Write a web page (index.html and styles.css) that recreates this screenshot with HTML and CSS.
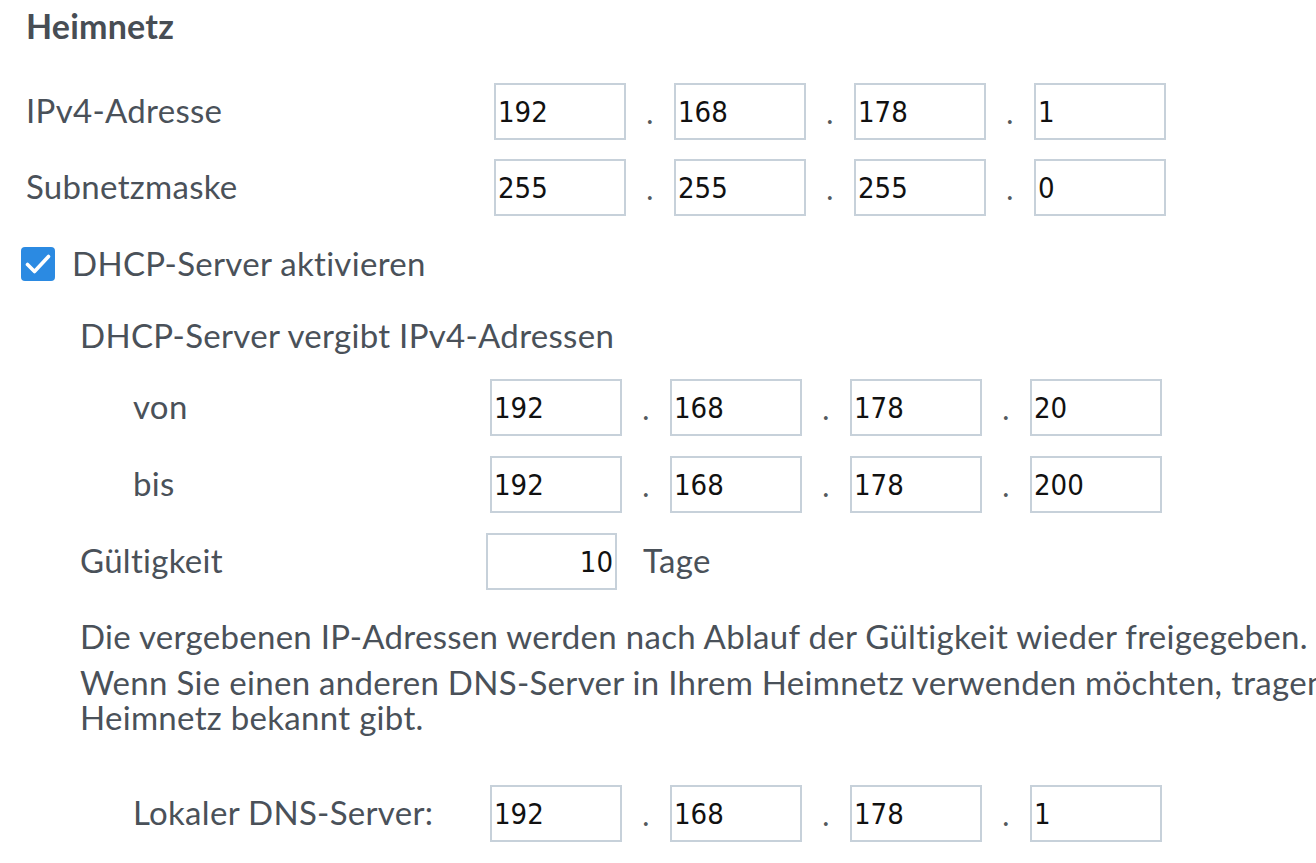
FILE: index.html
```html
<!DOCTYPE html>
<html lang="de">
<head>
<meta charset="utf-8">
<title>Heimnetz</title>
<link rel="stylesheet" href="styles.css">
</head>
<body>
<div class="page">
  <h1 class="title">Heimnetz</h1>

  <div class="row row-first">
    <span class="label label-top">IPv4-Adresse</span>
    <div class="ip">
      <input class="octet" type="text" value="192"><span class="dot">.</span>
      <input class="octet" type="text" value="168"><span class="dot">.</span>
      <input class="octet" type="text" value="178"><span class="dot">.</span>
      <input class="octet" type="text" value="1">
    </div>
  </div>

  <div class="row row-next">
    <span class="label label-top">Subnetzmaske</span>
    <div class="ip">
      <input class="octet" type="text" value="255"><span class="dot">.</span>
      <input class="octet" type="text" value="255"><span class="dot">.</span>
      <input class="octet" type="text" value="255"><span class="dot">.</span>
      <input class="octet" type="text" value="0">
    </div>
  </div>

  <label class="check-row">
    <span class="checkbox">
      <svg width="34" height="34" viewBox="0 0 34 34"><path d="M6.5 17.5 L13.5 24.5 L27.5 9.5" fill="none" stroke="#fff" stroke-width="3.6" stroke-linecap="round" stroke-linejoin="round"/></svg>
    </span>
    <span class="check-text">DHCP-Server aktivieren</span>
  </label>

  <div class="dhcp">
    <div class="subtitle">DHCP-Server vergibt IPv4-Adressen</div>

    <div class="row row-von">
      <span class="label label-sub">von</span>
      <div class="ip">
        <input class="octet" type="text" value="192"><span class="dot">.</span>
        <input class="octet" type="text" value="168"><span class="dot">.</span>
        <input class="octet" type="text" value="178"><span class="dot">.</span>
        <input class="octet" type="text" value="20">
      </div>
    </div>

    <div class="row row-dhcp">
      <span class="label label-sub">bis</span>
      <div class="ip">
        <input class="octet" type="text" value="192"><span class="dot">.</span>
        <input class="octet" type="text" value="168"><span class="dot">.</span>
        <input class="octet" type="text" value="178"><span class="dot">.</span>
        <input class="octet" type="text" value="200">
      </div>
    </div>

    <div class="row row-dhcp">
      <span class="label label-valid">Gültigkeit</span>
      <input class="octet days" type="text" value="10">
      <span class="unit">Tage</span>
    </div>

    <p class="note note-first">Die vergebenen IP-Adressen werden nach Ablauf der Gültigkeit wieder freigegeben.</p>
    <p class="note note-second">Wenn Sie einen anderen DNS-Server in Ihrem Heimnetz verwenden möchten, tragen Sie hier dessen IPv4-Adresse ein, die der DHCP-Server im<br>Heimnetz bekannt gibt.</p>

    <div class="row row-dns">
      <span class="label label-sub">Lokaler DNS-Server:</span>
      <div class="ip">
        <input class="octet" type="text" value="192"><span class="dot">.</span>
        <input class="octet" type="text" value="168"><span class="dot">.</span>
        <input class="octet" type="text" value="178"><span class="dot">.</span>
        <input class="octet" type="text" value="1">
      </div>
    </div>
  </div>
</div>
</body>
</html>
```

FILE: styles.css
```css
html, body {
  margin: 0;
  padding: 0;
  overflow: hidden;
  background: #ffffff;
}

.page {
  width: 1900px;
  padding-left: 26px;
  font-family: Lato, "Open Sans", sans-serif;
  font-size: 33px;
  letter-spacing: 0.3px;
  color: #4a5159;
}

.title {
  margin: 8px 0 0 0;
  font-size: 34px;
  font-weight: 700;
  letter-spacing: 0.2px;
  line-height: 36px;
  height: 36px;
  color: #474d54;
}

.row {
  display: flex;
  align-items: center;
  height: 57px;
}

.row-first { margin-top: 39px; }
.row-next { margin-top: 19px; }
.row-von { margin-top: 26px; }
.row-dhcp { margin-top: 20px; }
.row-dns { margin-top: 50px; }

.label {
  flex: none;
  line-height: 36px;
  padding-bottom: 4px;
  white-space: nowrap;
}

.label-top { width: 468px; }
.label-sub { width: 357px; padding-left: 53px; }
.label-valid { width: 406px; }

.ip {
  display: flex;
  align-items: center;
}

.octet {
  box-sizing: border-box;
  width: 132px;
  height: 57px;
  margin: 0;
  padding: 0 2px;
  border: 2px solid #c7d1da;
  border-radius: 0;
  background: #fff;
  font-family: "DejaVu Sans Condensed", "DejaVu Sans", sans-serif;
  font-size: 29px;
  letter-spacing: 0;
  color: #111;
  outline: none;
}

.dot {
  width: 48px;
  text-align: center;
  align-self: flex-end;
  line-height: 36px;
  padding-bottom: 10px;
  font-size: 30px;
  color: #55595e;
}

.days {
  width: 131px;
  text-align: right;
}

.unit {
  margin-left: 26px;
  line-height: 36px;
  padding-bottom: 4px;
}

.check-row {
  display: flex;
  align-items: center;
  margin-top: 31px;
  margin-left: -5px;
  height: 34px;
}

.checkbox {
  flex: none;
  width: 34px;
  height: 34px;
  border-radius: 4px;
  background: #2b8ae2;
  display: flex;
}

.check-text {
  margin-left: 17px;
  line-height: 36px;
  padding-bottom: 2px;
}

.dhcp {
  margin-left: 54px;
}

.subtitle {
  margin-top: 36px;
  line-height: 36px;
}

.note {
  margin: 0;
  line-height: 35px;
  white-space: nowrap;
}

.note-first { margin-top: 29px; }
.note-second { margin-top: 11px; }
```
